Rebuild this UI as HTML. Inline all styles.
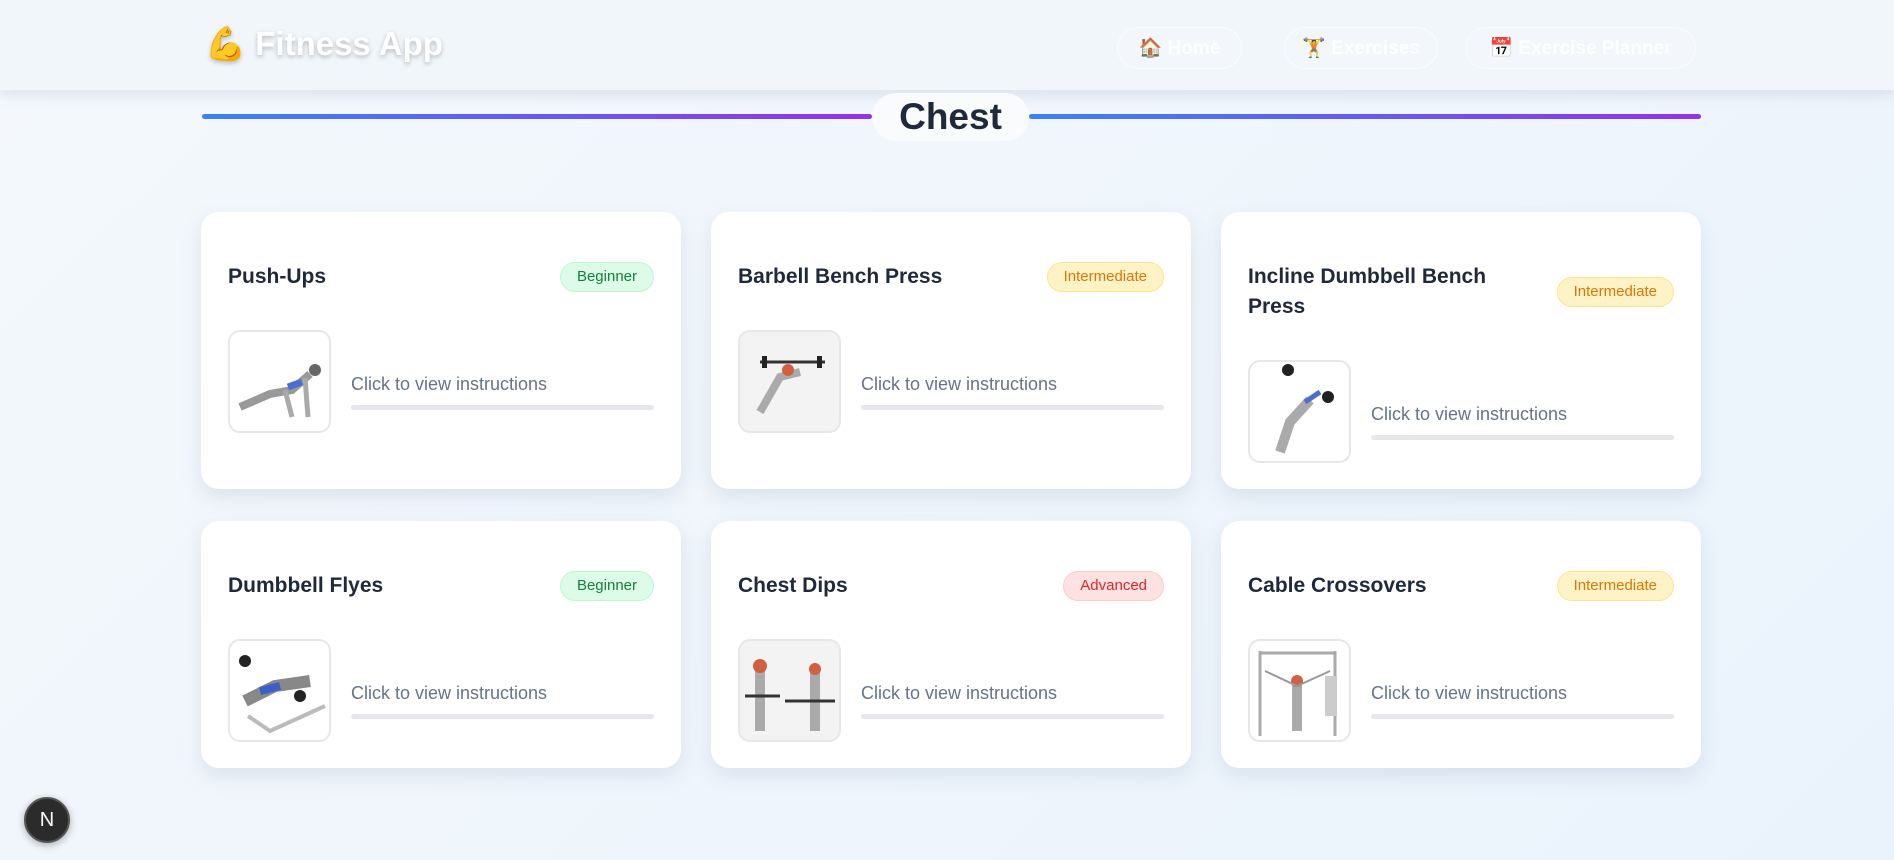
<!DOCTYPE html>
<html><head><meta charset="utf-8">
<style>
*{box-sizing:border-box;margin:0;padding:0}
body{width:1894px;height:860px;overflow:hidden;background:linear-gradient(135deg,#f4f8fc,#eaf3fc);font-family:"Liberation Sans",sans-serif;position:relative}
.hdr{position:absolute;left:0;top:0;width:1894px;height:90px;background:#f1f6fb;box-shadow:0 4px 14px rgba(100,120,150,.18)}
.logo{position:absolute;left:205px;top:25px;font-size:33px;font-weight:bold;color:#fff;text-shadow:0 2px 5px rgba(0,0,0,.25);white-space:nowrap}
.nav{position:absolute;top:27px;height:42px;border-radius:21px;border:1px solid rgba(255,255,255,.6);background:rgba(255,255,255,.15);color:#fff;font-weight:bold;font-size:19px;display:flex;align-items:center;justify-content:center;gap:6px;white-space:nowrap}
.line{position:absolute;left:202px;top:114px;height:5px;border-radius:3px;background:linear-gradient(90deg,#3b82f6,#9333ea)}
.line2{position:absolute;left:1029px;top:114px;width:672px;height:5px;border-radius:3px;background:linear-gradient(90deg,#3b82f6,#9333ea)}
.pill{position:absolute;left:872px;top:93px;width:157px;height:48px;border-radius:24px;background:#fafbfc;font-size:37px;font-weight:bold;color:#1e293b;text-align:center;line-height:48px}
.card{position:absolute;width:480px;height:277px;background:#fff;border-radius:18px;box-shadow:0 8px 20px rgba(120,140,170,.18);padding:50px 27px 0}
.card.r2{height:247px}
.top{display:flex;justify-content:space-between;align-items:center;min-height:30px}
.t{font-size:21px;font-weight:bold;color:#1e293b;line-height:30px;max-width:300px}
.b{height:30px;border-radius:15px;padding:0 16px;font-size:15px;line-height:28px;border:1px solid}
.beg{background:#dcfce7;border-color:#bbf7d0;color:#15803d}
.int{background:#fef3c7;border-color:#fde68a;color:#d97706}
.adv{background:#fee2e2;border-color:#fecaca;color:#dc2626}
.row{display:flex;align-items:center;margin-top:38px}
.img{width:103px;height:103px;border:2px solid #e5e7eb;border-radius:12px;background:#fff;overflow:hidden}
.img.g{background:#f3f3f3}
.txt{margin-left:20px;flex:1;padding-top:20px}
.txt div{font-size:18px;color:#64748b}
.bar{height:5px;border-radius:3px;background:#e5e7eb;margin-top:10px}
.n{position:absolute;left:24px;top:797px;width:46px;height:46px;border-radius:50%;background:#2b2b2b;border:2px solid #555;color:#fff;font-size:20px;text-align:center;line-height:42px;box-shadow:0 2px 8px rgba(0,0,0,.3)}
</style></head><body>
<div class="hdr">
<div class="logo">💪 Fitness App</div>
<div class="nav" style="left:1117px;width:125px">🏠 Home</div>
<div class="nav" style="left:1284px;width:154px">🏋️ Exercises</div>
<div class="nav" style="left:1465px;width:231px">📅 Exercise Planner</div>
</div>
<div class="line" style="width:670px"></div><div class="line2"></div>
<div class="pill">Chest</div>

<div class="card" style="left:201px;top:212px"><div class="top"><div class="t">Push-Ups</div><div class="b beg">Beginner</div></div>
<div class="row"><div class="img"><svg width="99" height="99"><path d="M10 75 L40 62 L62 58 L80 42" stroke="#999" stroke-width="8" fill="none"/><path d="M55 58 L62 85 M75 46 L78 85" stroke="#aaa" stroke-width="5"/><circle cx="85" cy="38" r="6" fill="#666"/><path d="M58 55 L72 50" stroke="#4a6fd0" stroke-width="7"/></svg></div><div class="txt"><div>Click to view instructions</div><div class="bar"></div></div></div></div>

<div class="card" style="left:711px;top:212px"><div class="top"><div class="t">Barbell Bench Press</div><div class="b int">Intermediate</div></div>
<div class="row"><div class="img g"><svg width="99" height="99"><path d="M20 30 H85" stroke="#333" stroke-width="3"/><rect x="22" y="24" width="5" height="12" fill="#222"/><rect x="77" y="24" width="5" height="12" fill="#222"/><path d="M20 80 L40 45 L60 40" stroke="#aaa" stroke-width="8" fill="none"/><circle cx="48" cy="38" r="6" fill="#d06040"/></svg></div><div class="txt"><div>Click to view instructions</div><div class="bar"></div></div></div></div>

<div class="card" style="left:1221px;top:212px"><div class="top"><div class="t">Incline Dumbbell Bench Press</div><div class="b int">Intermediate</div></div>
<div class="row"><div class="img"><svg width="99" height="99"><circle cx="38" cy="8" r="6" fill="#222"/><circle cx="78" cy="35" r="6" fill="#222"/><path d="M30 90 L40 60 L60 38" stroke="#aaa" stroke-width="10" fill="none"/><path d="M55 40 L70 30" stroke="#4a6fd0" stroke-width="5"/></svg></div><div class="txt"><div>Click to view instructions</div><div class="bar"></div></div></div></div>

<div class="card r2" style="left:201px;top:521px"><div class="top"><div class="t">Dumbbell Flyes</div><div class="b beg">Beginner</div></div>
<div class="row"><div class="img"><svg width="99" height="99"><path d="M15 60 L45 45 L80 40" stroke="#888" stroke-width="12" fill="none"/><path d="M30 50 L50 45" stroke="#3b5fc8" stroke-width="8"/><circle cx="15" cy="20" r="6" fill="#222"/><circle cx="70" cy="55" r="6" fill="#222"/><path d="M18 75 L40 90 L95 65" stroke="#bbb" stroke-width="4" fill="none"/></svg></div><div class="txt"><div>Click to view instructions</div><div class="bar"></div></div></div></div>

<div class="card r2" style="left:711px;top:521px"><div class="top"><div class="t">Chest Dips</div><div class="b adv">Advanced</div></div>
<div class="row"><div class="img g"><svg width="99" height="99"><path d="M20 25 V90 M75 25 V90" stroke="#aaa" stroke-width="10"/><circle cx="20" cy="25" r="7" fill="#d06040"/><circle cx="75" cy="28" r="6" fill="#d06040"/><path d="M5 55 H40 M45 60 H95" stroke="#333" stroke-width="3"/></svg></div><div class="txt"><div>Click to view instructions</div><div class="bar"></div></div></div></div>

<div class="card r2" style="left:1221px;top:521px"><div class="top"><div class="t">Cable Crossovers</div><div class="b int">Intermediate</div></div>
<div class="row"><div class="img"><svg width="99" height="99"><path d="M10 10 V95 M85 10 V95 M10 12 H85" stroke="#aaa" stroke-width="3" fill="none"/><rect x="75" y="35" width="12" height="40" fill="#ccc"/><path d="M47 40 V90" stroke="#aaa" stroke-width="10"/><circle cx="47" cy="40" r="6" fill="#d06040"/><path d="M15 30 L47 45 L80 30" stroke="#999" stroke-width="2" fill="none"/></svg></div><div class="txt"><div>Click to view instructions</div><div class="bar"></div></div></div></div>

<div class="n">N</div>
</body></html>
